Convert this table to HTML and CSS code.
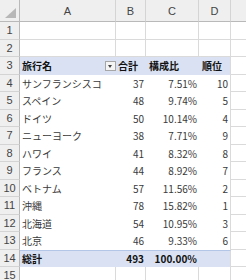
FILE: index.html
```html
<!DOCTYPE html>
<html>
<head>
    <meta charset="utf-8">
    <title>旅行先集計</title>
    <link rel="stylesheet" href="styles.css">
</head>
<body>
    <div class="sheet">
        <!-- column headers -->
        <div class="hd corner"><span class="tri"></span></div>
        <div class="hd">A</div>
        <div class="hd">B</div>
        <div class="hd">C</div>
        <div class="hd">D</div>
        <div class="hd edge"></div>

        <div class="rn">1</div><div class="c"></div><div class="c"></div><div class="c"></div><div class="c"></div><div class="c edge"></div>
        <div class="rn">2</div><div class="c"></div><div class="c"></div><div class="c"></div><div class="c"></div><div class="c edge"></div>

        <!-- table header -->
        <div class="rn">3</div>
        <div class="t th b filter-cell">旅行名<span class="filter"></span></div>
        <div class="t th b">合計</div>
        <div class="t th b pl">構成比</div>
        <div class="t th b pl last">順位</div>
        <div class="c edge"></div>

        <div class="rn">4</div><div class="t">サンフランシスコ</div><div class="t r">37</div><div class="t r">7.51%</div><div class="t r last">10</div><div class="c edge"></div>
        <div class="rn">5</div><div class="t">スペイン</div><div class="t r">48</div><div class="t r">9.74%</div><div class="t r last">5</div><div class="c edge"></div>
        <div class="rn">6</div><div class="t">ドイツ</div><div class="t r">50</div><div class="t r">10.14%</div><div class="t r last">4</div><div class="c edge"></div>
        <div class="rn">7</div><div class="t">ニューヨーク</div><div class="t r">38</div><div class="t r">7.71%</div><div class="t r last">9</div><div class="c edge"></div>
        <div class="rn">8</div><div class="t">ハワイ</div><div class="t r">41</div><div class="t r">8.32%</div><div class="t r last">8</div><div class="c edge"></div>
        <div class="rn">9</div><div class="t">フランス</div><div class="t r">44</div><div class="t r">8.92%</div><div class="t r last">7</div><div class="c edge"></div>
        <div class="rn">10</div><div class="t">ベトナム</div><div class="t r">57</div><div class="t r">11.56%</div><div class="t r last">2</div><div class="c edge"></div>
        <div class="rn">11</div><div class="t">沖縄</div><div class="t r">78</div><div class="t r">15.82%</div><div class="t r last">1</div><div class="c edge"></div>
        <div class="rn">12</div><div class="t">北海道</div><div class="t r">54</div><div class="t r">10.95%</div><div class="t r last">3</div><div class="c edge"></div>
        <div class="rn">13</div><div class="t">北京</div><div class="t r">46</div><div class="t r">9.33%</div><div class="t r last">6</div><div class="c edge"></div>

        <!-- total row -->
        <div class="rn">14</div>
        <div class="t tt b">総計</div>
        <div class="t tt b r">493</div>
        <div class="t tt b r">100.00%</div>
        <div class="t tt last"></div>
        <div class="c edge"></div>

        <div class="rn">15</div><div class="c"></div><div class="c"></div><div class="c"></div><div class="c"></div><div class="c edge"></div>
    </div>
</body>
</html>
```
FILE: styles.css
```css
body {
    margin: 0;
    background: #fff;
    overflow: hidden;
    font-family: "Noto Sans CJK JP", "Noto Sans", sans-serif;
    font-size: 10px;
    color: #3a3a3a;
}

.sheet {
    display: grid;
    grid-template-columns: 20px 96px 30px 53px 32px minmax(0, 1fr);
    grid-template-rows: 22px;
    grid-auto-rows: 17.5px;
    width: 100%;
}

.sheet > div {
    box-sizing: border-box;
    display: flex;
    align-items: center;
    white-space: nowrap;
    overflow: hidden;
    padding: 0 2px;
}

/* header strip */
.hd {
    background: #efefef;
    border-right: 1px solid #d4d4d4;
    border-bottom: 1px solid #b9b9b9;
    justify-content: center;
    color: #444;
    font-size: 11px;
    font-family: "Liberation Sans", sans-serif;
}

.corner {
    position: relative;
    border-right-color: #b9b9b9;
}

.tri {
    position: absolute;
    right: 3px;
    bottom: 3px;
    width: 0;
    height: 0;
    border-left: 11px solid transparent;
    border-bottom: 10px solid #b7b7b7;
}

.rn {
    background: #efefef;
    border-right: 1px solid #b9b9b9;
    border-bottom: 1px solid #d4d4d4;
    justify-content: center;
    color: #444;
    font-size: 11px;
    font-family: "Liberation Sans", sans-serif;
}

.c {
    border-right: 1px solid #dadada;
    border-bottom: 1px solid #dadada;
}

/* column E runs off the window */
.sheet > .edge {
    border-right: 0;
}

/* table range */
.t {
    background: #fff;
}

.t.last {
    border-right: 1px solid #dadada;
}

.th {
    background: #d9e1f2;
    color: #111;
}

.tt {
    background: #d9e1f2;
    color: #111;
    border-top: 1px solid #b4c6e7;
}

.b {
    font-weight: bold;
}

.r {
    justify-content: flex-end;
}

.pl {
    padding-left: 3px !important;
}

.filter-cell {
    justify-content: space-between;
    padding-right: 0 !important;
}

.filter {
    position: relative;
    width: 11px;
    height: 10px;
    box-sizing: border-box;
    border: 1px solid #a6a6a6;
    background: #f4f4f4;
}

.filter::after {
    content: "";
    position: absolute;
    left: 2px;
    top: 3px;
    border-left: 2.5px solid transparent;
    border-right: 2.5px solid transparent;
    border-top: 3px solid #444;
}
```
